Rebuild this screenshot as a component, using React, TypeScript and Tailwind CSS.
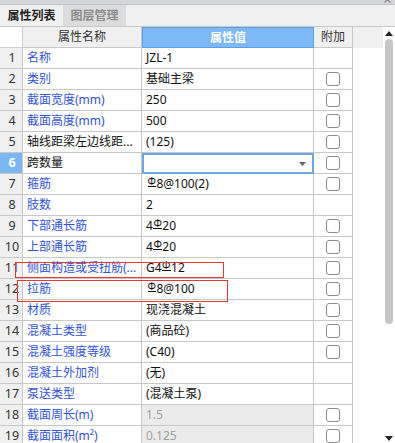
import React from "react";

const Rb = () => (
  <span className="relative -top-[3px] mx-[0.5px] inline-block border-b border-current text-[10px] leading-[9px] font-['Noto_Sans',sans-serif]">
    Φ
  </span>
);

type Row = {
  name: string;
  value: React.ReactNode;
  blue: boolean;
  cb: boolean;
  gray?: boolean;
  sel?: boolean;
};

const rows: Row[] = [
  { name: "名称", value: "JZL-1", blue: true, cb: false },
  { name: "类别", value: "基础主梁", blue: true, cb: true },
  { name: "截面宽度(mm)", value: "250", blue: true, cb: true },
  { name: "截面高度(mm)", value: "500", blue: true, cb: true },
  { name: "轴线距梁左边线距...", value: "(125)", blue: false, cb: true },
  { name: "跨数量", value: "", blue: false, cb: true, sel: true },
  {
    name: "箍筋",
    value: (
      <span className="pl-[1px]">
        <Rb />8@100(2)
      </span>
    ),
    blue: true,
    cb: true,
  },
  { name: "肢数", value: "2", blue: true, cb: false },
  {
    name: "下部通长筋",
    value: (
      <span>
        4<Rb />20
      </span>
    ),
    blue: true,
    cb: true,
  },
  {
    name: "上部通长筋",
    value: (
      <span>
        4<Rb />20
      </span>
    ),
    blue: true,
    cb: true,
  },
  {
    name: "侧面构造或受扭筋(...",
    value: (
      <span>
        G4<Rb />12
      </span>
    ),
    blue: true,
    cb: true,
  },
  {
    name: "拉筋",
    value: (
      <span className="pl-[1px]">
        <Rb />8@100
      </span>
    ),
    blue: true,
    cb: true,
  },
  { name: "材质", value: "现浇混凝土", blue: true, cb: true },
  { name: "混凝土类型", value: "(商品砼)", blue: true, cb: true },
  { name: "混凝土强度等级", value: "(C40)", blue: true, cb: true },
  { name: "混凝土外加剂", value: "(无)", blue: true, cb: false },
  { name: "泵送类型", value: "(混凝土泵)", blue: true, cb: false },
  { name: "截面周长(m)", value: "1.5", blue: true, cb: true, gray: true },
  { name: "截面面积(m²)", value: "0.125", blue: true, cb: true, gray: true },
];

export default function App() {
  return (
    <div className="relative h-[443px] w-[395px] overflow-hidden bg-white font-['Noto_Sans','Noto_Sans_CJK_SC',sans-serif] text-[12px] text-[#1a1a1a]">
      {/* top strip */}
      <div className="relative h-[5px] border-b border-[#c2c2c6] bg-[#d5d6da]">
        <svg className="absolute right-[4px] top-[-2px]" width="7" height="5" viewBox="0 0 7 5">
          <path d="M0.5 4.5 L3.5 1.5 L6.5 4.5" fill="none" stroke="#8a8a8a" strokeWidth="1.2" />
        </svg>
      </div>
      {/* tab bar */}
      <div className="flex h-[22px] border-b border-[#c8c8c8] bg-[#f0f0f0]">
        <div className="flex w-[63px] items-center justify-center font-bold text-[#222]">属性列表</div>
        <div className="flex w-[63px] items-center justify-center bg-[#dcdcdc] font-bold text-[#8c8c8c]">图层管理</div>
      </div>
      <div className="flex">
        {/* table */}
        <div className="w-[383px]">
          {/* header */}
          <div className="flex h-[21px]">
            <div className="w-[23px] border-b border-r border-[#d0d0d0] bg-white" />
            <div className="flex w-[119px] items-center justify-center border-b border-r border-[#c8c8c8] bg-[#f0f0f0] text-[#333]">
              属性名称
            </div>
            <div className="flex w-[172px] items-center justify-center border border-[#5d9fe6] bg-[#7db9f7] font-bold text-white">
              属性值
            </div>
            <div className="flex w-[39px] items-center justify-center border-b border-r border-[#c8c8c8] bg-[#f0f0f0] text-[#333]">
              附加
            </div>
            <div className="flex-1 bg-[#f0f0f0]" />
          </div>
          {rows.map((r, i) => (
            <div key={i} className="flex h-[21px]">
              <div
                className={
                  r.sel
                    ? "flex w-[23px] items-center justify-center border-b border-r border-[#c8c8c8] bg-[#7ab8f5] pl-[2px] text-[12.5px] font-bold text-white"
                    : "flex w-[23px] items-center justify-center border-b border-r border-[#c8c8c8] bg-[#f0f0f0] pl-[2px] text-[12.5px] text-[#333]"
                }
              >
                {i + 1}
              </div>
              <div
                className={
                  r.blue
                    ? "flex w-[119px] items-center whitespace-nowrap border-b border-r border-[#c8c8c8] pl-[4px] text-[#3253d8]"
                    : "flex w-[119px] items-center whitespace-nowrap border-b border-r border-[#c8c8c8] pl-[4px] text-[#111]"
                }
              >
                {r.name}
              </div>
              {r.sel ? (
                <div className="relative flex w-[172px] items-center justify-end border-2 border-[#6ea8e2] bg-white pr-[6px]">
                  <svg width="7" height="4" viewBox="0 0 7 4">
                    <path d="M0 0 H7 L3.5 4 Z" fill="#666" />
                  </svg>
                </div>
              ) : (
                <div
                  className={
                    r.gray
                      ? "flex w-[172px] items-center whitespace-nowrap border-b border-r border-[#c8c8c8] bg-[#ebebeb] pl-[4px] text-[#a0a0a0]"
                      : "flex w-[172px] items-center whitespace-nowrap border-b border-r border-[#c8c8c8] pl-[4px] text-[#111]"
                  }
                >
                  {r.value}
                </div>
              )}
              <div className="flex w-[39px] items-center justify-center border-b border-r border-[#c8c8c8]">
                {r.cb && <div className="h-[14px] w-[14px] rounded-[3px] border border-[#8c8c8c] bg-white" />}
              </div>
              <div className="flex-1" />
            </div>
          ))}
        </div>
        {/* scrollbar */}
        <div className="flex h-[416px] w-[12px] flex-col items-center bg-white">
          <svg className="mt-[4px]" width="8" height="5" viewBox="0 0 8 5">
            <path d="M0 5 L4 0 L8 5 Z" fill="#222" />
          </svg>
          <div className="mt-[3px] h-[285px] w-[8px] rounded-full bg-[#c6c6c6]" />
          <div className="flex-1" />
          <svg className="mb-[2px]" width="8" height="5" viewBox="0 0 8 5">
            <path d="M0 0 L8 0 L4 5 Z" fill="#222" />
          </svg>
        </div>
      </div>
      {/* red annotation boxes */}
      <div className="absolute left-[15px] top-[262px] h-[16px] w-[209px] border-[1.5px] border-[#e53935]" />
      <div className="absolute left-[17px] top-[280px] h-[22px] w-[211px] border-[1.5px] border-[#e53935]" />
    </div>
  );
}
